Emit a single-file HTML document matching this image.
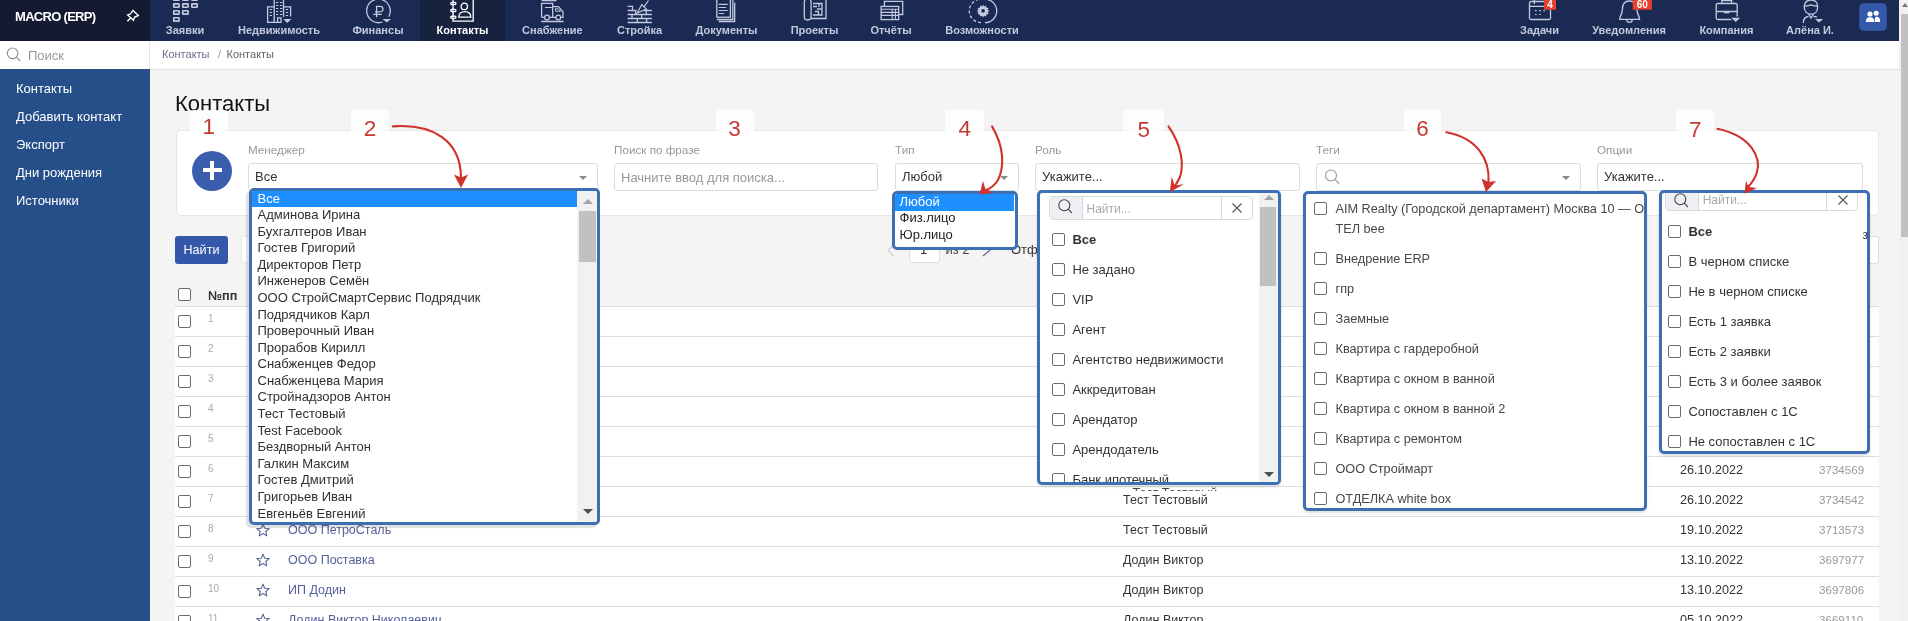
<!DOCTYPE html>
<html><head><meta charset="utf-8">
<style>
*{box-sizing:border-box;margin:0;padding:0}
html,body{width:1908px;height:621px;overflow:hidden;background:#f4f4f4;font-family:"Liberation Sans",sans-serif;color:#333}
.a{position:absolute}
#hl{left:0;top:0;width:150px;height:41px;background:#131a31}
#hn{left:150px;top:0;width:1749px;height:41px;background:#1b2a53}
#tabsel{left:420px;top:0;width:85px;height:41px;background:#17223f}
.nt{position:absolute;top:25px;font-size:11px;font-weight:bold;color:#c3c9dd;white-space:nowrap;line-height:11px;transform:translateX(-50%)}
.ico{position:absolute;top:0}
#sb{left:0;top:69px;width:150px;height:552px;background:#264e88}
#ss{left:0;top:41px;width:150px;height:28px;background:#fff;border-right:1px solid #e6e6e6}
.si{position:absolute;left:16px;font-size:13px;color:#fff;white-space:nowrap;line-height:13px}
#bc{left:150px;top:41px;width:1749px;height:29px;background:#fff;border-bottom:1px solid #e3e3e3}
#scr{left:1899px;top:0;width:9px;height:621px;background:#f1f1f1}
#thumb{left:1901px;top:14px;width:7px;height:223px;background:#c1c1c1}
.lbl{position:absolute;top:144px;font-size:11.7px;color:#999;line-height:12px;white-space:nowrap}
.inp{position:absolute;top:163px;height:28px;background:#fff;border:1px solid #dcdcdc;border-radius:3px}
.inp span{position:absolute;top:6px;font-size:13px;color:#333;line-height:14px;white-space:nowrap}
.caret{position:absolute;right:10px;top:12px;width:0;height:0;border-left:4px solid transparent;border-right:4px solid transparent;border-top:4px solid #888}
.cb{position:absolute;width:13px;height:13px;border:1px solid #6a6a6a;border-radius:2px;background:#fff}
.row{position:absolute;left:175px;width:1704px;height:30px;background:#fff;border-top:1px solid #dedede}
.row .num{position:absolute;left:33px;top:7.2px;font-size:10px;color:#aaa;line-height:10px}
.row .star{position:absolute;left:81px;top:5.5px}
.row .lnk{position:absolute;left:113px;top:7px;font-size:12.5px;color:#56619a;line-height:13px;white-space:nowrap}
.row .mgr{position:absolute;left:948px;top:7.4px;font-size:12.5px;color:#333;line-height:13px;white-space:nowrap}
.row .dt{position:absolute;left:1505px;top:7.3px;font-size:12.6px;color:#333;line-height:13px;white-space:nowrap}
.row .rid{position:absolute;left:1644px;top:6.8px;font-size:11.6px;color:#999;line-height:12px;white-space:nowrap}
.dd{border:3px solid #3d70b3;border-radius:5px;background:#fff;box-shadow:-3px 3px 1px rgba(0,0,0,.12);overflow:hidden}
.ddin{position:absolute;left:0;top:0;right:0;bottom:0;overflow:hidden}
.opt{position:absolute;left:0;width:325px;height:16.58px;line-height:16.58px;padding-left:5.5px;font-size:13px;color:#303030;white-space:nowrap;margin-top:-0.5px}
.opt.sel{background:#1e8fff;color:#fff;margin-top:-0.5px}
.vsb{position:absolute;background:#f1f1f1}
.vsb .th{position:absolute;background:#c1c1c1}
.up{position:absolute;width:0;height:0;border-left:5px solid transparent;border-right:5px solid transparent;border-bottom:5px solid #a3a3a3}
.dn{position:absolute;width:0;height:0;border-left:5px solid transparent;border-right:5px solid transparent;border-top:5px solid #505050}
.srch{border:1px solid #d9d9d9;border-radius:4px;background:#fff;overflow:hidden}
.sic{background:#eff0f3;border-right:1px solid #d9d9d9}
.scl{border-left:1px solid #d9d9d9}
.ph{font-size:12px;color:#aaa;line-height:14px;white-space:nowrap}
.it{font-size:13px;color:#333;line-height:16px;white-space:nowrap}
.it6{font-size:12.7px;color:#474747;line-height:20px;white-space:nowrap}
.abox{background:rgba(255,255,255,.82);border-radius:3px}
.anum{font-size:22.5px;line-height:24px;color:#c23a33;transform:translateX(-50%);white-space:nowrap}
</style></head>
<body style="will-change:transform">
<div class="a" id="hl"></div>
<div class="a" id="hn"></div>
<div class="a" id="tabsel"></div>
<div class="a" style="left:15px;top:10px;font-size:13px;font-weight:bold;color:#fff;letter-spacing:-0.7px;line-height:13px">MACRO (ERP)</div>

<!-- header icons -->
<svg class="a" style="left:0;top:0" width="1908" height="41" viewBox="0 0 1908 41">
<g fill="none" stroke="#c3c9de" stroke-width="1.3">
<rect x="173.75" y="-3.15" width="5.3" height="3.4" rx="0.5" stroke-width="1.7"/>
<rect x="182.75" y="-3.15" width="5.3" height="3.4" rx="0.5" stroke-width="1.7"/>
<rect x="191.85" y="-3.15" width="5.3" height="3.4" rx="0.5" stroke-width="1.7"/>
<rect x="173.75" y="3.85" width="5.3" height="3.4" rx="0.5" stroke-width="1.7"/>
<rect x="182.75" y="3.85" width="5.3" height="3.4" rx="0.5" stroke-width="1.7"/>
<rect x="191.85" y="3.85" width="5.3" height="3.4" rx="0.5" stroke-width="1.7"/>
<rect x="173.75" y="10.75" width="5.3" height="3.4" rx="0.5" stroke-width="1.7"/>
<rect x="182.75" y="10.75" width="5.3" height="3.4" rx="0.5" stroke-width="1.7"/>
<rect x="173.75" y="17.75" width="5.3" height="3.4" rx="0.5" stroke-width="1.7"/>
<!-- Недвижимость -->
<path d="M274.2 23 V-2 H283.5 V17 M267.6 22 V6.8 H274.2 M283.5 6.8 H290.6 V16.5 M267 22.3 H281 V17.8 H277.6 V22.3"/>
<g stroke-width="1.1"><path d="M276 2.5h2.3M280 2.5h2.2M276 5.5h2.3M280 5.5h2.2M276 8.5h2.3M280 8.5h2.2M276 11.5h2.3M280 11.5h2.2M276 14.5h2.3M280 14.5h2.2M269.7 9.5h2.3M269.7 12.5h2.3M269.7 15.5h2.3M285.7 9.5h2.5M285.7 12.5h2.5M285.7 15.5h2.5"/></g>
<!-- Финансы -->
<path d="M382.5 22 A11.8 11.8 0 1 1 388.7 16.8"/>
<path d="M376.6 17.3 V6.4 H380.2 A2.75 2.75 0 0 1 380.2 11.9 H375 M373.3 14.3 H381.7"/>
<!-- Снабжение -->
<path d="M541.6 17.3 V3.4 H552.7 V17.3 M552.7 6.6 H558.5 L563 12 V17.3 H561.3 M544.5 17.3 H541.6 M549.5 17.3 H555.5 M541.2 21.5 H563.6 M541.6 0.5 H556.5"/>
<path d="M555.5 8.7 H558 L560.5 11.2 H555.5 Z" stroke-width="1"/>
<path d="M545 7.5 H552.7" stroke-width="1"/>
<circle cx="547" cy="17.5" r="2.4"/><circle cx="558.3" cy="17.5" r="2.4"/>
<!-- Стройка -->
<path d="M627.6 6.4 H632.5 V10.5 M627.6 10.5 H636.5 M643.5 10.5 H651.8 M627.6 14.5 H651.8 M627.6 18.5 H651.8 M627.6 22.5 H651.8 M635.7 10.5 V14.5 M646.2 10.5 V14.5 M632 14.5 V18.5 M641.7 14.5 V18.5 M637.3 18.5 V22.5 M646.6 18.5 V22.5"/>
<path d="M637 13 L641.8 4.8 L646.5 9 Z M644 6.8 L648.5 0.5" stroke-width="1.2"/>
<!-- Документы -->
<rect x="716.8" y="-2" width="13.6" height="19.2"/>
<path d="M716.9 19.5 H732.8 V-1 M718.7 21.5 H734.7 V2.5"/>
<path d="M718.7 4.4h9M718.7 7.5h7.5M718.7 10.5h9M718.7 13.5h5.5" stroke-width="1.1"/>
<!-- Проекты -->
<rect x="804.3" y="-1" width="6.8" height="21" rx="3.2"/>
<path d="M811.1 18.5 H826 V-1 M813 3.5 H822 V15 H813 M813 6.5 H817 M817 9 H822 M815 11.5 H818.5 V15 M819 3.5 V7"/>
<!-- Отчёты -->
<path d="M884.4 6.2 V1.4 H902.7 V14.5 H898.8"/>
<rect x="881.1" y="6.4" width="17.6" height="13.2"/>
<path d="M881.1 9.3 H898.8 M881.1 12.4 H898.8 M881.1 15.4 H898.8 M892.2 9.3 V19.6 M895.4 9.3 V19.6" stroke-width="1.1"/>
<!-- Возможности -->
<path d="M985 -0.8 A11.7 11.7 0 0 1 985 22.6"/>
<path d="M981 22.6 A11.7 11.7 0 0 1 981 -0.8" stroke-dasharray="3 2.2"/>
<!-- Задачи -->
<rect x="1529.5" y="1.5" width="21" height="18" rx="1.5"/>
<path d="M1529.5 6.4 H1550.5 M1534.3 -1 V4"/>
<path d="M1535 10.7h1.6M1539.2 10.7h1.6M1543.3 10.7h1.6M1535 14.5h1.6M1539.2 14.5h1.6" stroke-width="1.2"/>
<!-- Уведомления -->
<path d="M1629.3 1 C1623 1 1622.3 6 1622.3 10 C1622.3 14.5 1619.6 16 1619.6 19.4 H1639.6 C1639.6 16 1637 14.5 1637 10 C1637 6 1635.6 1 1629.3 1 Z"/>
<path d="M1626.5 19.5 A2.9 2.9 0 0 0 1632.3 19.5"/>
<!-- Компания -->
<rect x="1716.2" y="3.5" width="21" height="16" rx="1.5"/>
<path d="M1721.8 3.5 V0.5 H1731.6 V3.5 M1716.2 11.5 H1737.2"/>
<!-- Алёна -->
<path d="M1811 0 C1805 0 1804.3 4 1804.3 7.5 C1804.3 11.5 1807 14.2 1811 14.2 C1815 14.2 1817.6 11.5 1817.6 7.5 C1817.6 4 1817 0 1811 0 Z"/>
<path d="M1804.5 6 C1807 6.5 1809 5.2 1811 4.8 C1813 5.5 1815 6.4 1817.5 6"/>
<path d="M1803.3 23 C1803.3 18.5 1805 16.8 1808.5 16.5 M1813.5 16.5 C1815.5 16.6 1816.5 17 1817 17.5 M1808.6 14 L1811 18 L1813.5 14"/>
<!-- pin -->
<path d="M133 10.4 L138.3 15.5 L134.5 17.3 L133.5 20.2 L127.7 15 L130.6 13.8 Z M130.7 18 L127.3 21.3" stroke="#fff" stroke-width="1.4"/>
</g>
<g fill="#c3c9de" stroke="none">
<path d="M283.3 18.9 H291.4 L287.35 22.9 Z" stroke="#1b2a53" stroke-width="2.4" stroke-linejoin="round" paint-order="stroke"/><path d="M382.5 19.1 H391 L386.75 22.5 Z" stroke="#1b2a53" stroke-width="2.4" stroke-linejoin="round" paint-order="stroke"/><path d="M1731.2 17.8 H1740.3 L1735.75 22 Z" stroke="#1b2a53" stroke-width="2.4" stroke-linejoin="round" paint-order="stroke"/><path d="M1815 18.9 H1823.2 L1819.1 22.5 Z" stroke="#1b2a53" stroke-width="2.4" stroke-linejoin="round" paint-order="stroke"/>
<rect x="1723.8" y="11" width="5.5" height="2.3"/>
<path d="M983.1 4.6 l1 1.9 2-.9.3 2.2 2.2.3-.9 2 1.9 1-1.9 1 .9 2-2.2.3-.3 2.2-2-.9-1 1.9-1-1.9-2 .9-.3-2.2-2.2-.3.9-2-1.9-1 1.9-1-.9-2 2.2-.3.3-2.2 2 .9z"/>
<circle cx="983.1" cy="10.9" r="1.8" fill="#1b2a53"/>
</g>
<g fill="none" stroke="#fff" stroke-width="1.3">
<path d="M453 -1 V21.1 H473.2 V-1"/>
<ellipse cx="453.3" cy="3.4" rx="2.6" ry="1.3"/><ellipse cx="453.3" cy="10.5" rx="2.6" ry="1.3"/><ellipse cx="453.3" cy="17.3" rx="2.6" ry="1.3"/>
<circle cx="464.3" cy="6.4" r="3.2"/>
<path d="M458.8 17.2 C458.8 13.6 461 11.7 464.8 11.7 C468.6 11.7 470.8 13.6 470.8 17.2 Z"/>
</g>
<!-- badges -->
<rect x="1544.1" y="-1" width="11.9" height="10.7" fill="#e8402b"/>
<text x="1550" y="8" font-family="Liberation Sans" font-size="10" font-weight="bold" fill="#fff" text-anchor="middle">4</text>
<rect x="1632.7" y="-1" width="19.2" height="10.7" fill="#e8402b"/>
<text x="1642.3" y="8" font-family="Liberation Sans" font-size="10" font-weight="bold" fill="#fff" text-anchor="middle">60</text>
<!-- user btn -->
<rect x="1859.2" y="3.2" width="27.6" height="27.5" rx="4.5" fill="#3459aa"/>
<g fill="#fff"><circle cx="1870" cy="14" r="2.6"/><path d="M1865.8 22 C1865.8 18.3 1867.5 17.2 1870 17.2 C1872.5 17.2 1874.2 18.3 1874.2 22 Z"/>
<circle cx="1876.2" cy="13.3" r="2.5"/><path d="M1874.8 22 C1874.8 19 1874.5 17.4 1876.2 16.7 C1878.6 16.7 1880.2 17.8 1880.2 22 Z"/></g>
</svg>

<div class="nt" style="left:185px">Заявки</div>
<div class="nt" style="left:279px">Недвижимость</div>
<div class="nt" style="left:378px">Финансы</div>
<div class="nt" style="left:462.5px;color:#fff">Контакты</div>
<div class="nt" style="left:552.4px">Снабжение</div>
<div class="nt" style="left:639.6px">Стройка</div>
<div class="nt" style="left:726.5px">Документы</div>
<div class="nt" style="left:814.5px">Проекты</div>
<div class="nt" style="left:891px">Отчёты</div>
<div class="nt" style="left:982px">Возможности</div>
<div class="nt" style="left:1539.5px">Задачи</div>
<div class="nt" style="left:1629px">Уведомления</div>
<div class="nt" style="left:1726.4px">Компания</div>
<div class="nt" style="left:1810px">Алёна И.</div>

<div class="a" id="ss"></div>
<div class="a" id="sb"></div>
<div class="a" id="bc"></div>
<div class="a" style="left:28px;top:49px;font-size:13px;color:#9a9a9a;line-height:13px">Поиск</div>
<div class="si" style="top:82px">Контакты</div>
<div class="si" style="top:110px">Добавить контакт</div>
<div class="si" style="top:138px">Экспорт</div>
<div class="si" style="top:166px">Дни рождения</div>
<div class="si" style="top:194px">Источники</div>


<!-- breadcrumb -->
<div class="a" style="left:162px;top:49px;font-size:11px;color:#6b6f8a;line-height:11px">Контакты</div>
<div class="a" style="left:218px;top:49px;font-size:11px;color:#999;line-height:11px">/</div>
<div class="a" style="left:226.5px;top:49px;font-size:11px;color:#666;line-height:11px">Контакты</div>
<!-- title -->
<div class="a" style="left:175px;top:93px;font-size:22px;color:#111;line-height:22px">Контакты</div>

<!-- filter card -->
<div class="a" style="left:176px;top:130px;width:1703px;height:86px;background:#fff;border:1px solid #e6e6e6;border-radius:5px"></div>
<div class="a" style="left:192px;top:151px;width:40px;height:40px;border-radius:50%;background:#3b5dae"></div>
<div class="a" style="left:203px;top:168.3px;width:18.8px;height:3.9px;background:#fff"></div>
<div class="a" style="left:210.4px;top:160.8px;width:3.9px;height:18.8px;background:#fff"></div>

<div class="lbl" style="left:248px">Менеджер</div>
<div class="lbl" style="left:614px">Поиск по фразе</div>
<div class="lbl" style="left:895px">Тип</div>
<div class="lbl" style="left:1035px">Роль</div>
<div class="lbl" style="left:1316px">Теги</div>
<div class="lbl" style="left:1597px">Опции</div>

<div class="inp" style="left:248px;width:350px"><span style="left:6px">Все</span><i class="caret"></i></div>
<div class="inp" style="left:614px;width:264px"><span style="left:6px;top:7px;color:#999">Начните ввод для поиска...</span></div>
<div class="inp" style="left:895px;width:124px"><span style="left:6px">Любой</span><i class="caret"></i></div>
<div class="inp" style="left:1035px;width:265px"><span style="left:6px">Укажите...</span></div>
<div class="inp" style="left:1316px;width:265px"><i class="caret"></i></div>
<div class="inp" style="left:1597px;width:266px"><span style="left:6px">Укажите...</span></div>

<svg class="a" style="left:0;top:41px" width="30" height="28" viewBox="0 41 30 28"><circle cx="12.6" cy="53.3" r="5.3" fill="none" stroke="#8a8a8a" stroke-width="1.1"/><path d="M16.4 57.1 L20.2 61.2" stroke="#8a8a8a" stroke-width="1.1"/></svg>
<svg class="a" style="left:1316px;top:163px" width="30" height="28" viewBox="1316 163 30 28"><circle cx="1331" cy="175.5" r="5.5" fill="none" stroke="#9a9a9a" stroke-width="1.1"/><path d="M1335 179.5 L1339.3 183.8" stroke="#9a9a9a" stroke-width="1.1"/></svg>
<!-- pagination -->
<svg class="a" style="left:880px;top:236px" width="120" height="28" viewBox="880 236 120 28"><path d="M893.5 245 L888 250.5 L893.5 256" fill="none" stroke="#cfcfcf" stroke-width="1.2"/><path d="M983 244.5 L989.8 250.3 L983 256" fill="none" stroke="#5a6696" stroke-width="1.2"/></svg>
<div class="a" style="left:908.5px;top:236px;width:31px;height:27px;background:#fff;border:1px solid #ddd;border-radius:3px"></div>
<div class="a" style="left:920px;top:243px;font-size:13px;line-height:13px;color:#333">1</div>
<div class="a" style="left:945.5px;top:243px;font-size:13px;line-height:13px;color:#444">из 2</div>
<div class="a" style="left:1011px;top:243px;font-size:13px;line-height:13px;color:#333">Отфильтровано</div>
<!-- table -->
<div class="a cb" style="left:178px;top:288px"></div>
<div class="a" style="left:208px;top:289.5px;font-size:12.6px;font-weight:bold;color:#333;line-height:12px">№пп</div>
<div class="a" style="left:240.5px;top:235.5px;width:12px;height:27.5px;background:#fff;border:1px solid #e8e8e8;border-radius:3px"></div>
<div class="a" style="left:1869px;top:236px;width:10px;height:28px;background:#fff;border:1px solid #ddd;border-left:none;border-radius:0 3px 3px 0"></div>
<div class="a" style="left:1862px;top:229px;font-size:12px;color:#333;line-height:12px">з</div>
<div class="row" style="top:306px">
<div class="cb" style="left:3px;top:7.5px"></div>
<div class="num">1</div>
</div>
<div class="row" style="top:336px">
<div class="cb" style="left:3px;top:7.5px"></div>
<div class="num">2</div>
</div>
<div class="row" style="top:366px">
<div class="cb" style="left:3px;top:7.5px"></div>
<div class="num">3</div>
</div>
<div class="row" style="top:396px">
<div class="cb" style="left:3px;top:7.5px"></div>
<div class="num">4</div>
</div>
<div class="row" style="top:426px">
<div class="cb" style="left:3px;top:7.5px"></div>
<div class="num">5</div>
</div>
<div class="row" style="top:456px">
<div class="cb" style="left:3px;top:7.5px"></div>
<div class="num">6</div>
<div class="mgr">Тест Тестовый</div>
<div class="dt">26.10.2022</div>
<div class="rid">3734569</div>
</div>
<div class="row" style="top:486px">
<div class="cb" style="left:3px;top:7.5px"></div>
<div class="num">7</div>
<div class="mgr">Тест Тестовый</div>
<div class="dt">26.10.2022</div>
<div class="rid">3734542</div>
</div>
<div class="row" style="top:516px">
<div class="cb" style="left:3px;top:7.5px"></div>
<div class="num">8</div>
<svg class="star" width="14" height="14" viewBox="0 0 14 14"><path d="M7.00 1.10 L8.70 5.25 L13.18 5.59 L9.76 8.50 L10.82 12.86 L7.00 10.50 L3.18 12.86 L4.24 8.50 L0.82 5.59 L5.30 5.25 Z" fill="none" stroke="#5a6696" stroke-width="1.1" stroke-linejoin="round"/></svg>
<div class="lnk" style="">ООО ПетроСталь</div>
<div class="mgr">Тест Тестовый</div>
<div class="dt">19.10.2022</div>
<div class="rid">3713573</div>
</div>
<div class="row" style="top:546px">
<div class="cb" style="left:3px;top:7.5px"></div>
<div class="num">9</div>
<svg class="star" width="14" height="14" viewBox="0 0 14 14"><path d="M7.00 1.10 L8.70 5.25 L13.18 5.59 L9.76 8.50 L10.82 12.86 L7.00 10.50 L3.18 12.86 L4.24 8.50 L0.82 5.59 L5.30 5.25 Z" fill="none" stroke="#5a6696" stroke-width="1.1" stroke-linejoin="round"/></svg>
<div class="lnk" style="">ООО Поставка</div>
<div class="mgr">Додин Виктор</div>
<div class="dt">13.10.2022</div>
<div class="rid">3697977</div>
</div>
<div class="row" style="top:576px">
<div class="cb" style="left:3px;top:7.5px"></div>
<div class="num">10</div>
<svg class="star" width="14" height="14" viewBox="0 0 14 14"><path d="M7.00 1.10 L8.70 5.25 L13.18 5.59 L9.76 8.50 L10.82 12.86 L7.00 10.50 L3.18 12.86 L4.24 8.50 L0.82 5.59 L5.30 5.25 Z" fill="none" stroke="#5a6696" stroke-width="1.1" stroke-linejoin="round"/></svg>
<div class="lnk" style="">ИП Додин</div>
<div class="mgr">Додин Виктор</div>
<div class="dt">13.10.2022</div>
<div class="rid">3697806</div>
</div>
<div class="row" style="top:606px">
<div class="cb" style="left:3px;top:7.5px"></div>
<div class="num">11</div>
<svg class="star" width="14" height="14" viewBox="0 0 14 14"><path d="M7.00 1.10 L8.70 5.25 L13.18 5.59 L9.76 8.50 L10.82 12.86 L7.00 10.50 L3.18 12.86 L4.24 8.50 L0.82 5.59 L5.30 5.25 Z" fill="none" stroke="#5a6696" stroke-width="1.1" stroke-linejoin="round"/></svg>
<div class="lnk" style="">Додин Виктор Николаевич</div>
<div class="mgr">Додин Виктор</div>
<div class="dt">05.10.2022</div>
<div class="rid">3669110</div>
</div>
<!-- search button -->
<div class="a" style="left:175px;top:236px;width:53px;height:28px;background:#3457aa;border-radius:3px"></div>
<div class="a" style="left:183.5px;top:243.5px;font-size:12.6px;color:#fff;line-height:13px">Найти</div>

<div class="a" style="left:1130px;top:487px;width:100px;height:4px;overflow:hidden"><div class="a" style="left:2.5px;top:-0.5px;font-size:12.5px;line-height:13px;color:#444;white-space:nowrap">Тест Тестовый</div></div>
<!-- dropdown 2 -->
<div class="a dd" style="left:249px;top:188px;width:351px;height:337px">
<div class="ddin">
<div class="opt sel" style="top:0.00px">Все</div>
<div class="opt" style="top:16.58px">Админова Ирина</div>
<div class="opt" style="top:33.16px">Бухгалтеров Иван</div>
<div class="opt" style="top:49.74px">Гостев Григорий</div>
<div class="opt" style="top:66.32px">Директоров Петр</div>
<div class="opt" style="top:82.90px">Инженеров Семён</div>
<div class="opt" style="top:99.48px">ООО СтройСмартСервис Подрядчик</div>
<div class="opt" style="top:116.06px">Подрядчиков Карл</div>
<div class="opt" style="top:132.64px">Проверочный Иван</div>
<div class="opt" style="top:149.22px">Прорабов Кирилл</div>
<div class="opt" style="top:165.80px">Снабженцев Федор</div>
<div class="opt" style="top:182.38px">Снабженцева Мария</div>
<div class="opt" style="top:198.96px">Стройнадзоров Антон</div>
<div class="opt" style="top:215.54px">Тест Тестовый</div>
<div class="opt" style="top:232.12px">Test Facebook</div>
<div class="opt" style="top:248.70px">Бездворный Антон</div>
<div class="opt" style="top:265.28px">Галкин Максим</div>
<div class="opt" style="top:281.86px">Гостев Дмитрий</div>
<div class="opt" style="top:298.44px">Григорьев Иван</div>
<div class="opt" style="top:315.02px">Евгеньёв Евгений</div>
<div class="vsb" style="left:325px;top:0;width:20px;height:331px"><i class="up" style="left:6px;top:8px"></i><div class="th" style="left:2px;top:20px;width:17px;height:51px"></div><i class="dn" style="left:5.5px;top:317.5px"></i></div>
</div></div>
<!-- dropdown 4 -->
<div class="a dd" style="left:891.5px;top:191px;width:126px;height:58.7px;border-width:3.5px;box-shadow:none">
<div class="a" style="left:0;top:0;width:119px;height:16.5px;background:#1e8fff"></div>
<div class="a" style="left:5px;top:-0.3px;height:16.5px;line-height:16.5px;font-size:13px;color:#fff;white-space:nowrap">Любой</div>
<div class="a" style="left:5px;top:16.4px;height:16.5px;line-height:16.5px;font-size:13px;color:#222;white-space:nowrap">Физ.лицо</div>
<div class="a" style="left:5px;top:33.1px;height:16.5px;line-height:16.5px;font-size:13px;color:#222;white-space:nowrap">Юр.лицо</div>
</div>
<!-- dropdown 5 -->
<div class="a dd" style="left:1037px;top:190px;width:244px;height:295px;box-shadow:0 2px 3px rgba(0,0,0,.12)">
<div class="a srch" style="left:9px;top:3px;width:204px;height:24px"><div class="a sic" style="left:0;top:0;width:33px;height:22px"></div><div class="a scl" style="left:171px;top:0;width:32px;height:22px"></div><div class="a ph" style="left:36.5px;top:5px">Найти...</div></div>
<svg class="a" style="left:17px;top:5px" width="16" height="16" viewBox="0 0 16 16"><circle cx="7.3" cy="7.3" r="5.5" fill="none" stroke="#444" stroke-width="1.1"/><path d="M11.2 11.2 L15 15" stroke="#444" stroke-width="1.1"/></svg>
<svg class="a" style="left:189.70000000000005px;top:7.5px" width="14" height="14" viewBox="0 0 14 14"><path d="M2.5 2.5 L11.5 11.5 M11.5 2.5 L2.5 11.5" stroke="#555" stroke-width="1.1"/></svg>
<div class="cb" style="left:12px;top:40.0px"></div><div class="a it" style="left:32.40000000000009px;top:38.5px;font-weight:bold;">Все</div>
<div class="cb" style="left:12px;top:70.0px"></div><div class="a it" style="left:32.40000000000009px;top:68.5px;">Не задано</div>
<div class="cb" style="left:12px;top:100.0px"></div><div class="a it" style="left:32.40000000000009px;top:98.5px;">VIP</div>
<div class="cb" style="left:12px;top:130.0px"></div><div class="a it" style="left:32.40000000000009px;top:128.5px;">Агент</div>
<div class="cb" style="left:12px;top:160.0px"></div><div class="a it" style="left:32.40000000000009px;top:158.5px;">Агентство недвижимости</div>
<div class="cb" style="left:12px;top:190.0px"></div><div class="a it" style="left:32.40000000000009px;top:188.5px;">Аккредитован</div>
<div class="cb" style="left:12px;top:220.0px"></div><div class="a it" style="left:32.40000000000009px;top:218.5px;">Арендатор</div>
<div class="cb" style="left:12px;top:250.0px"></div><div class="a it" style="left:32.40000000000009px;top:248.5px;">Арендодатель</div>
<div class="cb" style="left:12px;top:280.0px"></div><div class="a it" style="left:32.40000000000009px;top:278.5px;">Банк ипотечный</div>
<div class="vsb" style="left:218.5px;top:0;width:19.5px;height:289px"><i class="up" style="left:5px;top:2px;border-bottom-color:#a3a3a3"></i><div class="th" style="left:1.7px;top:14px;width:16.3px;height:79px"></div><i class="dn" style="left:5px;top:279px"></i></div>
</div>
<!-- dropdown 6 -->
<div class="a dd" style="left:1302.5px;top:191px;width:344px;height:320px;box-shadow:0 2px 3px rgba(0,0,0,.12)">
<div class="cb" style="left:8.799999999999955px;top:8.0px"></div><div class="a it6" style="left:30.0px;top:4.5px">AIM Realty (Городской департамент) Москва 10 — ОТЕЛЬ</div><div class="a it6" style="left:30.0px;top:24.5px">ТЕЛ bee</div>
<div class="cb" style="left:8.799999999999955px;top:58.0px"></div><div class="a it6" style="left:30.0px;top:54.5px">Внедрение ERP</div>
<div class="cb" style="left:8.799999999999955px;top:88.0px"></div><div class="a it6" style="left:30.0px;top:84.5px">гпр</div>
<div class="cb" style="left:8.799999999999955px;top:118.0px"></div><div class="a it6" style="left:30.0px;top:114.5px">Заемные</div>
<div class="cb" style="left:8.799999999999955px;top:148.0px"></div><div class="a it6" style="left:30.0px;top:144.5px">Квартира с гардеробной</div>
<div class="cb" style="left:8.799999999999955px;top:178.0px"></div><div class="a it6" style="left:30.0px;top:174.5px">Квартира с окном в ванной</div>
<div class="cb" style="left:8.799999999999955px;top:208.0px"></div><div class="a it6" style="left:30.0px;top:204.5px">Квартира с окном в ванной 2</div>
<div class="cb" style="left:8.799999999999955px;top:238.0px"></div><div class="a it6" style="left:30.0px;top:234.5px">Квартира с ремонтом</div>
<div class="cb" style="left:8.799999999999955px;top:268.0px"></div><div class="a it6" style="left:30.0px;top:264.5px">ООО Строймарт</div>
<div class="cb" style="left:8.799999999999955px;top:298.0px"></div><div class="a it6" style="left:30.0px;top:294.5px">ОТДЕЛКА white box</div>
</div>
<!-- dropdown 7 -->
<div class="a dd" style="left:1659px;top:190px;width:211px;height:264px;box-shadow:0 2px 3px rgba(0,0,0,.12)">
<div class="a srch" style="left:3.2000000000000455px;top:-6px;width:193px;height:24px"><div class="a sic" style="left:0;top:0;width:33px;height:22px"></div><div class="a scl" style="left:160px;top:0;width:32px;height:22px"></div><div class="a ph" style="left:36.5px;top:5px">Найти...</div></div>
<svg class="a" style="left:11px;top:-1.5px" width="16" height="16" viewBox="0 0 16 16"><circle cx="7.3" cy="7.3" r="5.5" fill="none" stroke="#444" stroke-width="1.1"/><path d="M11.2 11.2 L15 15" stroke="#444" stroke-width="1.1"/></svg>
<svg class="a" style="left:173.5px;top:-0.5px" width="14" height="14" viewBox="0 0 14 14"><path d="M2.5 2.5 L11.5 11.5 M11.5 2.5 L2.5 11.5" stroke="#555" stroke-width="1.1"/></svg>
<div class="cb" style="left:6.2999999999999545px;top:32.0px"></div><div class="a it" style="left:26.40000000000009px;top:30.5px;font-weight:bold;">Все</div>
<div class="cb" style="left:6.2999999999999545px;top:62.0px"></div><div class="a it" style="left:26.40000000000009px;top:60.5px;">В черном списке</div>
<div class="cb" style="left:6.2999999999999545px;top:92.0px"></div><div class="a it" style="left:26.40000000000009px;top:90.5px;">Не в черном списке</div>
<div class="cb" style="left:6.2999999999999545px;top:122.0px"></div><div class="a it" style="left:26.40000000000009px;top:120.5px;">Есть 1 заявка</div>
<div class="cb" style="left:6.2999999999999545px;top:152.0px"></div><div class="a it" style="left:26.40000000000009px;top:150.5px;">Есть 2 заявки</div>
<div class="cb" style="left:6.2999999999999545px;top:182.0px"></div><div class="a it" style="left:26.40000000000009px;top:180.5px;">Есть 3 и более заявок</div>
<div class="cb" style="left:6.2999999999999545px;top:212.0px"></div><div class="a it" style="left:26.40000000000009px;top:210.5px;">Сопоставлен с 1С</div>
<div class="cb" style="left:6.2999999999999545px;top:242.0px"></div><div class="a it" style="left:26.40000000000009px;top:240.5px;">Не сопоставлен с 1С</div>
</div>
<div class="a" style="left:1862.5px;top:229px;font-size:12px;line-height:12px;color:#333">з</div>
<!-- annotations -->
<div class="a abox" style="left:189.5px;top:109.5px;width:38.5px;height:33px"></div>
<div class="a abox" style="left:351px;top:109.5px;width:38.3px;height:33px"></div>
<div class="a abox" style="left:715.6px;top:109.5px;width:38.0px;height:33px"></div>
<div class="a abox" style="left:945.4px;top:109.5px;width:38.9px;height:33px"></div>
<div class="a abox" style="left:1123.4px;top:109.5px;width:40.6px;height:33px"></div>
<div class="a abox" style="left:1404.2px;top:109.5px;width:36.8px;height:33px"></div>
<div class="a abox" style="left:1676.1px;top:109.5px;width:38.3px;height:33px"></div>
<div class="a anum" style="left:208.8px;top:114.5px">1</div>
<div class="a anum" style="left:370.1px;top:116.7px">2</div>
<div class="a anum" style="left:734.6px;top:116.7px">3</div>
<div class="a anum" style="left:964.8px;top:116.8px">4</div>
<div class="a anum" style="left:1143.7px;top:118.3px">5</div>
<div class="a anum" style="left:1422.6px;top:116.8px">6</div>
<div class="a anum" style="left:1695.2px;top:118.3px">7</div>
<svg class="a" style="left:0;top:0" width="1908" height="621" viewBox="0 0 1908 621">
<g fill="none" stroke="#d0322c" stroke-width="2.1" stroke-linecap="round">
<path d="M393 126.4 C432 123.5 461 140 461 178"/>
<path d="M992 126.4 C1005 148 1004 168 998 180 C995 185 990 189 984 191"/>
<path d="M1168.5 126.4 C1182 146 1184 165 1180 177 C1178 182 1175 186 1172 189"/>
<path d="M1446.3 132.2 C1478 138 1490 160 1488.5 182"/>
<path d="M1717.4 128.7 C1752 136 1761 158 1757 172 C1755 179 1751 184 1747 188"/>
</g>
<g fill="#d0322c" stroke="none">
<path d="M454 174.5 L461 177.5 L468 174.5 L461 188 Z"/>
<path d="M983 181 L985.5 189 L993.5 192.5 L979.5 194.5 Z"/>
<path d="M1171.8 176.5 L1174.5 185.5 L1184 184.2 L1169.8 192 Z"/>
<path d="M1481.5 178.5 L1488.5 182 L1496 181 L1486 192 Z"/>
<path d="M1746 180.5 L1748.5 187 L1757 188 L1744.5 193.8 Z"/>
</g>
</svg>
<div class="a" id="scr"></div>
<div class="a" id="thumb"></div>
<div class="a" style="left:1901.5px;top:3px;width:0;height:0;border-left:3px solid transparent;border-right:3px solid transparent;border-bottom:4px solid #777"></div>
</body></html>
